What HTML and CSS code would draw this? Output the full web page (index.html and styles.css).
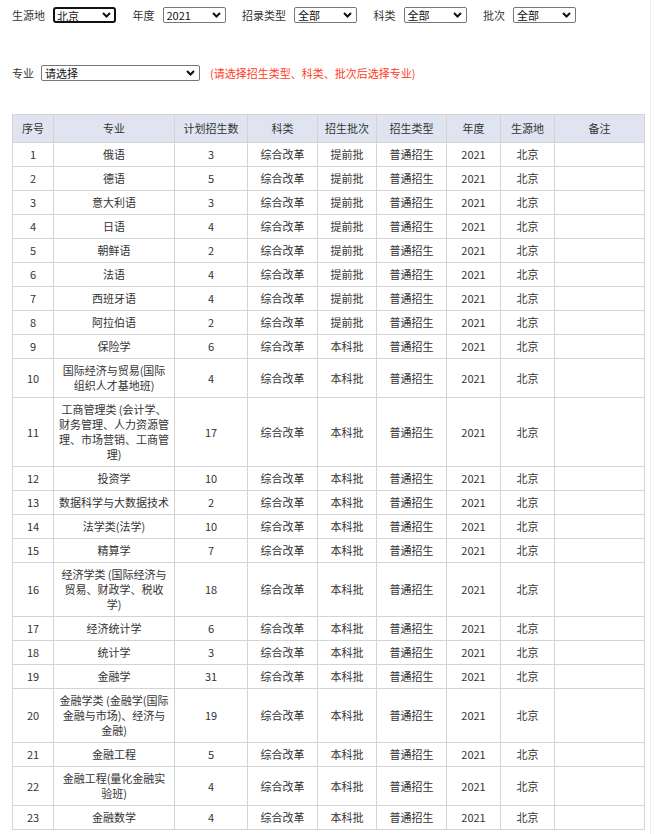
FILE: index.html
```html
<!DOCTYPE html>
<html lang="zh-CN">
<head>
<meta charset="utf-8">
<title>招生计划</title>
<link rel="stylesheet" href="styles.css">
</head>
<body>
<div class="page">
  <div class="filters">
    <label class="lbl">生源地</label>
    <span class="sel-wrap gap"><select class="sel focused"><option>北京</option></select><svg class="chev" width="9" height="6" viewBox="0 0 9 6"><polyline points="1,1 4.5,4.5 8,1" fill="none" stroke="#111" stroke-width="2"/></svg></span>
    <label class="lbl">年度</label>
    <span class="sel-wrap gap"><select class="sel"><option>2021</option></select><svg class="chev" width="9" height="6" viewBox="0 0 9 6"><polyline points="1,1 4.5,4.5 8,1" fill="none" stroke="#111" stroke-width="2"/></svg></span>
    <label class="lbl">招录类型</label>
    <span class="sel-wrap gap"><select class="sel"><option>全部</option></select><svg class="chev" width="9" height="6" viewBox="0 0 9 6"><polyline points="1,1 4.5,4.5 8,1" fill="none" stroke="#111" stroke-width="2"/></svg></span>
    <label class="lbl">科类</label>
    <span class="sel-wrap gap"><select class="sel"><option>全部</option></select><svg class="chev" width="9" height="6" viewBox="0 0 9 6"><polyline points="1,1 4.5,4.5 8,1" fill="none" stroke="#111" stroke-width="2"/></svg></span>
    <label class="lbl">批次</label>
    <span class="sel-wrap"><select class="sel"><option>全部</option></select><svg class="chev" width="9" height="6" viewBox="0 0 9 6"><polyline points="1,1 4.5,4.5 8,1" fill="none" stroke="#111" stroke-width="2"/></svg></span>
  </div>
  <div class="filters second">
    <label class="lbl lbl-tight">专业</label>
    <span class="sel-wrap"><select class="sel wide"><option>请选择</option></select><svg class="chev" width="9" height="6" viewBox="0 0 9 6"><polyline points="1,1 4.5,4.5 8,1" fill="none" stroke="#111" stroke-width="2"/></svg></span>
    <span class="hint">(请选择招生类型、科类、批次后选择专业)</span>
  </div>
  <table class="plan">
    <colgroup>
      <col class="c1"><col class="c2"><col class="c3"><col class="c4"><col class="c5"><col class="c6"><col class="c7"><col class="c8"><col class="c9">
    </colgroup>
    <thead>
      <tr><th>序号</th><th>专业</th><th>计划招生数</th><th>科类</th><th>招生批次</th><th>招生类型</th><th>年度</th><th>生源地</th><th>备注</th></tr>
    </thead>
    <tbody>
      <tr><td>1</td><td>俄语</td><td>3</td><td>综合改革</td><td>提前批</td><td>普通招生</td><td>2021</td><td>北京</td><td></td></tr>
      <tr><td>2</td><td>德语</td><td>5</td><td>综合改革</td><td>提前批</td><td>普通招生</td><td>2021</td><td>北京</td><td></td></tr>
      <tr><td>3</td><td>意大利语</td><td>3</td><td>综合改革</td><td>提前批</td><td>普通招生</td><td>2021</td><td>北京</td><td></td></tr>
      <tr><td>4</td><td>日语</td><td>4</td><td>综合改革</td><td>提前批</td><td>普通招生</td><td>2021</td><td>北京</td><td></td></tr>
      <tr><td>5</td><td>朝鲜语</td><td>2</td><td>综合改革</td><td>提前批</td><td>普通招生</td><td>2021</td><td>北京</td><td></td></tr>
      <tr><td>6</td><td>法语</td><td>4</td><td>综合改革</td><td>提前批</td><td>普通招生</td><td>2021</td><td>北京</td><td></td></tr>
      <tr><td>7</td><td>西班牙语</td><td>4</td><td>综合改革</td><td>提前批</td><td>普通招生</td><td>2021</td><td>北京</td><td></td></tr>
      <tr><td>8</td><td>阿拉伯语</td><td>2</td><td>综合改革</td><td>提前批</td><td>普通招生</td><td>2021</td><td>北京</td><td></td></tr>
      <tr><td>9</td><td>保险学</td><td>6</td><td>综合改革</td><td>本科批</td><td>普通招生</td><td>2021</td><td>北京</td><td></td></tr>
      <tr><td>10</td><td>国际经济与贸易(国际组织人才基地班)</td><td>4</td><td>综合改革</td><td>本科批</td><td>普通招生</td><td>2021</td><td>北京</td><td></td></tr>
      <tr><td>11</td><td>工商管理类 (会计学、财务管理、人力资源管理、市场营销、工商管理)</td><td>17</td><td>综合改革</td><td>本科批</td><td>普通招生</td><td>2021</td><td>北京</td><td></td></tr>
      <tr><td>12</td><td>投资学</td><td>10</td><td>综合改革</td><td>本科批</td><td>普通招生</td><td>2021</td><td>北京</td><td></td></tr>
      <tr><td>13</td><td>数据科学与大数据技术</td><td>2</td><td>综合改革</td><td>本科批</td><td>普通招生</td><td>2021</td><td>北京</td><td></td></tr>
      <tr><td>14</td><td>法学类(法学)</td><td>10</td><td>综合改革</td><td>本科批</td><td>普通招生</td><td>2021</td><td>北京</td><td></td></tr>
      <tr><td>15</td><td>精算学</td><td>7</td><td>综合改革</td><td>本科批</td><td>普通招生</td><td>2021</td><td>北京</td><td></td></tr>
      <tr><td>16</td><td>经济学类 (国际经济与贸易、财政学、税收学)</td><td>18</td><td>综合改革</td><td>本科批</td><td>普通招生</td><td>2021</td><td>北京</td><td></td></tr>
      <tr><td>17</td><td>经济统计学</td><td>6</td><td>综合改革</td><td>本科批</td><td>普通招生</td><td>2021</td><td>北京</td><td></td></tr>
      <tr><td>18</td><td>统计学</td><td>3</td><td>综合改革</td><td>本科批</td><td>普通招生</td><td>2021</td><td>北京</td><td></td></tr>
      <tr><td>19</td><td>金融学</td><td>31</td><td>综合改革</td><td>本科批</td><td>普通招生</td><td>2021</td><td>北京</td><td></td></tr>
      <tr><td>20</td><td>金融学类 (金融学(国际金融与市场)、经济与金融)</td><td>19</td><td>综合改革</td><td>本科批</td><td>普通招生</td><td>2021</td><td>北京</td><td></td></tr>
      <tr><td>21</td><td>金融工程</td><td>5</td><td>综合改革</td><td>本科批</td><td>普通招生</td><td>2021</td><td>北京</td><td></td></tr>
      <tr><td>22</td><td>金融工程(量化金融实验班)</td><td>4</td><td>综合改革</td><td>本科批</td><td>普通招生</td><td>2021</td><td>北京</td><td></td></tr>
      <tr><td>23</td><td>金融数学</td><td>4</td><td>综合改革</td><td>本科批</td><td>普通招生</td><td>2021</td><td>北京</td><td></td></tr>
    </tbody>
  </table>
</div>
</body>
</html>
```
FILE: styles.css
```css
html, body {
  margin: 0;
  padding: 0;
  background: #fff;
}
body {
  font-family: "Noto Sans CJK SC", "Noto Sans", sans-serif;
  font-size: 11px;
  color: #333;
}
.page {
  width: 651px;
  min-height: 834px;
  border-right: 1px solid #ececec;
  padding: 7px 0 0 12px;
  box-sizing: border-box;
}
.filters {
  display: flex;
  align-items: center;
  height: 16px;
}
.filters.second {
  margin-top: 42px;
}
.lbl {
  margin-right: 8px;
  line-height: 16px;
  color: #333;
}
.lbl-tight {
  margin-right: 7px;
}
.sel-wrap {
  position: relative;
  display: inline-block;
  height: 16px;
}
.sel-wrap.gap {
  margin-right: 16.5px;
}
.sel {
  -webkit-appearance: none;
  appearance: none;
  box-sizing: border-box;
  width: 63px;
  height: 16px;
  margin: 0;
  padding: 0 14px 0 3px;
  border: 1px solid #767676;
  border-radius: 2px;
  background: #fff;
  font-family: "Noto Sans CJK SC", "Noto Sans", sans-serif;
  font-size: 11px;
  line-height: 14px;
  color: #111;
  display: block;
}
.sel.focused {
  border: 2px solid #111;
  border-radius: 3px;
  padding-left: 2px;
  outline: none;
}
.sel.wide {
  width: 159px;
}
.chev {
  position: absolute;
  right: 5px;
  top: 5px;
  pointer-events: none;
}
.hint {
  margin-left: 10px;
  color: #ff3b22;
  line-height: 16px;
}
.plan {
  margin-top: 33px;
  border-collapse: collapse;
  table-layout: fixed;
  width: 632px;
}
.c1 { width: 41px; }
.c2 { width: 121px; }
.c3 { width: 73px; }
.c4 { width: 70px; }
.c5 { width: 59px; }
.c6 { width: 70px; }
.c7 { width: 54px; }
.c8 { width: 54px; }
.c9 { width: 90px; }
.plan th,
.plan td {
  border: 1px solid #d4d4d4;
  text-align: center;
  vertical-align: middle;
  line-height: 15px;
  padding: 4px 4px;
  font-weight: normal;
  color: #333;
}
.plan th {
  background: #dfe4f0;
  padding-top: 6px;
  padding-bottom: 6px;
}
```
